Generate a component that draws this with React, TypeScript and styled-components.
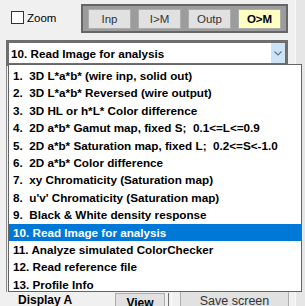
import React from "react";
import styled, { createGlobalStyle } from "styled-components";

const Global = createGlobalStyle`
  html, body { margin: 0; padding: 0; background: #f0f0f0; }
  body { font-family: "Liberation Sans", Arial, sans-serif; }
`;

const Page = styled.div`
  position: relative;
  width: 305px;
  height: 306px;
  overflow: hidden;
  display: flex;
  background: #f0f0f0;
`;

const Main = styled.div`
  width: 296px;
  display: flex;
  flex-direction: column;
`;

const Strip = styled.div`
  width: 9px;
  border-left: 1px solid #f8f8f8;
  background: #e6e6e6;
`;

const TopRow = styled.div`
  height: 40px;
  display: flex;
  align-items: flex-start;
`;

const CheckLabel = styled.label`
  margin: 11px 0 0 11px;
  width: 70px;
  display: flex;
  align-items: center;
  gap: 3px;
  font-size: 11.5px;
  color: #000;
`;

const CheckBox = styled.span`
  box-sizing: border-box;
  width: 13px;
  height: 13px;
  border: 1px solid #333;
  background: #fff;
`;

const ModeGroup = styled.div`
  box-sizing: border-box;
  margin-top: 4px;
  width: 207px;
  height: 29px;
  border: 2px solid #666;
  background: #9c9c9c;
  display: flex;
  align-items: center;
  gap: 7px;
  padding: 0 4px 0 5px;
`;

const ModeButton = styled.div<{ $active?: boolean }>`
  box-sizing: border-box;
  width: 43px;
  height: 20px;
  border: 1px solid #adadad;
  background: ${(p) => (p.$active ? "#ffffc4" : "#e1e1e1")};
  display: flex;
  align-items: center;
  justify-content: center;
  font-size: 11.5px;
  font-weight: ${(p) => (p.$active ? 700 : 400)};
  color: ${(p) => (p.$active ? "#000" : "#333")};
`;

const ComboFrame = styled.div`
  box-sizing: border-box;
  margin-left: 6px;
  width: 282px;
  height: 26px;
  border: 3px solid #6e6e6e;
  background: #fff;
  display: flex;
  align-items: stretch;
`;

const ComboText = styled.div`
  flex: 1;
  padding-left: 2px;
  display: flex;
  align-items: center;
  font-size: 11.7px;
  font-weight: 700;
  color: #000;
`;

const ComboArrow = styled.div`
  width: 14px;
  background: #cce4f7;
  display: flex;
  align-items: center;
  justify-content: center;
`;

const GroupArea = styled.div`
  margin-left: 6px;
  height: 226px;
  border-left: 1px solid #8a8a8a;
`;

const BottomRow = styled.div`
  display: flex;
  align-items: flex-start;
  height: 14px;
`;

const DisplayLabel = styled.div`
  width: 97px;
  padding: 1px 0 0 18px;
  font-size: 12px;
  font-weight: 700;
  color: #000;
`;

const SmallButton = styled.div<{ $bold?: boolean; $w: number }>`
  box-sizing: border-box;
  width: ${(p) => p.$w}px;
  height: 22px;
  margin-top: ${(p) => (p.$bold ? "1px" : "-4px")};
  border: 1px solid #adadad;
  background: #e1e1e1;
  text-align: center;
  padding-top: ${(p) => (p.$bold ? "2px" : "5px")};
  font-size: ${(p) => (p.$bold ? "12px" : "12.5px")};
  font-weight: ${(p) => (p.$bold ? 700 : 400)};
  color: ${(p) => (p.$bold ? "#000" : "#333")};
`;

const Divider = styled.div`
  width: 2px;
  height: 14px;
  margin: 1px 8px 0 3px;
  border-left: 1px solid #6e6e6e;
  border-right: 1px solid #fff;
`;

const DropList = styled.div`
  position: absolute;
  left: 8px;
  top: 64px;
  box-sizing: border-box;
  width: 294px;
  height: 228px;
  border: 1px solid #646464;
  background: #fff;
  padding-top: 2px;
  overflow: hidden;
`;

const Item = styled.div<{ $selected?: boolean }>`
  height: 17.4px;
  line-height: 17.4px;
  padding-left: 4px;
  white-space: pre;
  font-size: 11.7px;
  font-weight: 700;
  background: ${(p) => (p.$selected ? "#0078d7" : "transparent")};
  color: ${(p) => (p.$selected ? "#fff" : "#000")};
`;

const items = [
  "1.  3D L*a*b* (wire inp, solid out)",
  "2.  3D L*a*b* Reversed (wire output)",
  "3.  3D HL or h*L* Color difference",
  "4.  2D a*b* Gamut map, fixed S;  0.1<=L<=0.9",
  "5.  2D a*b* Saturation map, fixed L;  0.2<=S<-1.0",
  "6.  2D a*b* Color difference",
  "7.  xy Chromaticity (Saturation map)",
  "8.  u'v' Chromaticity (Saturation map)",
  "9.  Black & White density response",
  "10. Read Image for analysis",
  "11. Analyze simulated ColorChecker",
  "12. Read reference file",
  "13. Profile Info",
];

export default function App() {
  return (
    <>
      <Global />
      <Page>
        <Main>
          <TopRow>
            <CheckLabel>
              <CheckBox />
              Zoom
            </CheckLabel>
            <ModeGroup>
              <ModeButton>Inp</ModeButton>
              <ModeButton>I&gt;M</ModeButton>
              <ModeButton>Outp</ModeButton>
              <ModeButton $active>O&gt;M</ModeButton>
            </ModeGroup>
          </TopRow>
          <ComboFrame>
            <ComboText>10. Read Image for analysis</ComboText>
            <ComboArrow>
              <svg width="8" height="5" viewBox="0 0 8 5">
                <path d="M0.5 0.5 L4 4 L7.5 0.5" fill="none" stroke="#707070" strokeWidth="1.1" />
              </svg>
            </ComboArrow>
          </ComboFrame>
          <GroupArea />
          <BottomRow>
            <DisplayLabel>Display A</DisplayLabel>
            <SmallButton $bold $w={50}>View</SmallButton>
            <Divider />
            <SmallButton $w={109}>Save screen</SmallButton>
          </BottomRow>
        </Main>
        <Strip />
        <DropList>
          {items.map((t, i) => (
            <Item key={i} $selected={i === 9}>
              {t}
            </Item>
          ))}
        </DropList>
      </Page>
    </>
  );
}
